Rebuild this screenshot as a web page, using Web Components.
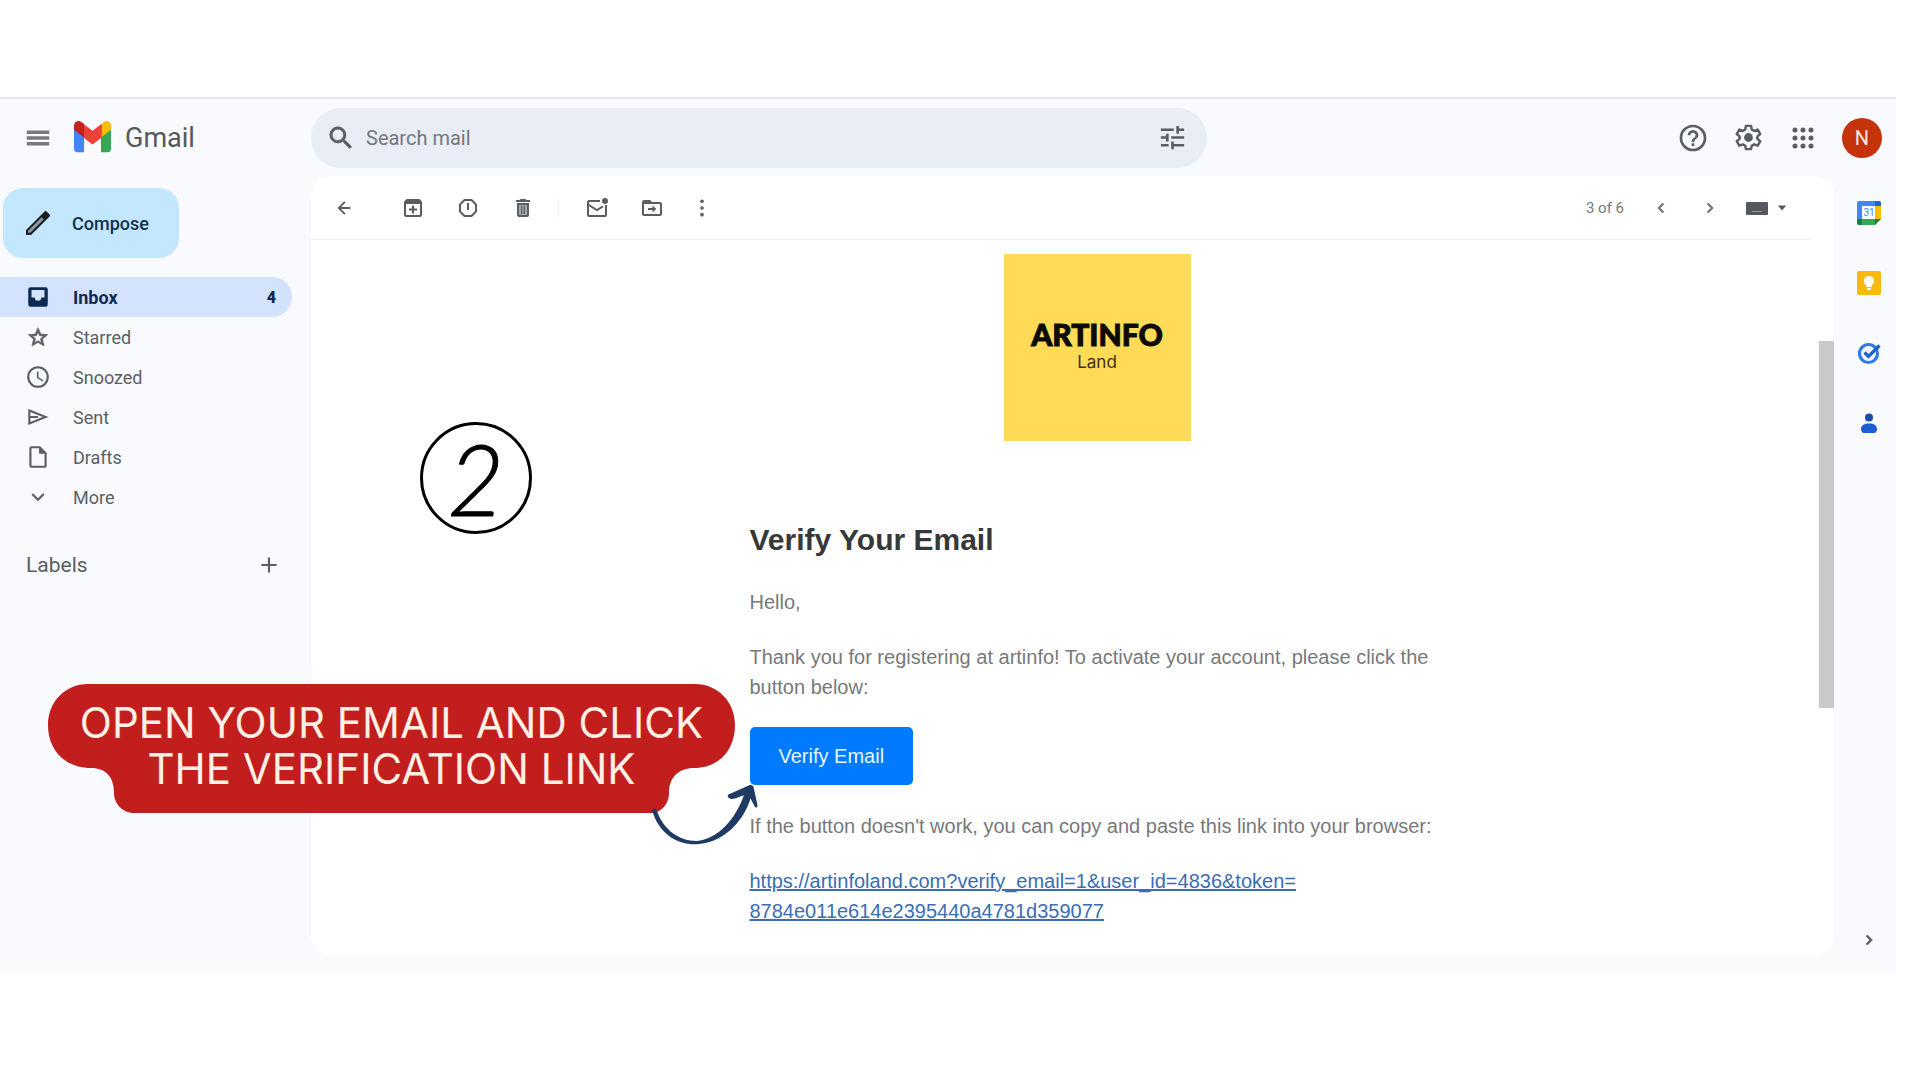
<!DOCTYPE html>
<html lang="en">
<head>
<meta charset="utf-8">
<title>Gmail - Verify Your Email</title>
<style>
    body {
        margin: 0;
        background: #fff;
        font-family: Roboto, "Liberation Sans", sans-serif;
        color: #5a5d61;
    }
</style>
</head>
<body>
<mail-app></mail-app>

<script>
const icons = {
    menu: `<path fill="#77797c" d="M3 18h18v-2.800H3zm0-4.600h18v-2.800H3zM3 6v2.800h18V6z"/>`,
    search: `<path stroke="currentColor" stroke-width=".5" d="M15.500 14h-.79l-.28-.27A6.470 6.470 0 0 0 16 9.500 6.500 6.500 0 1 0 9.500 16c1.610 0 3.090-.59 4.230-1.570l.27.28v.79l5 4.990L20.490 19zm-6 0C7.010 14 5 11.990 5 9.500S7.010 5 9.500 5 14 7.010 14 9.500 11.990 14 9.500 14z"/>`,
    tune: `<path d="M3 17v2h6v-2zM3 5v2h10V5zm10 16v-2h8v-2h-8v-2h-2v6zM7 9v2H3v2h4v2h2V9zm14 4v-2H11v2zm-6-4h2V7h4V5h-4V3h-2z"/>`,
    help: `<path d="M11 18h2v-2h-2zm1-16a10 10 0 1 0 0 20 10 10 0 0 0 0-20zm0 18c-4.410 0-8-3.590-8-8s3.590-8 8-8 8 3.590 8 8-3.590 8-8 8zm0-14a4 4 0 0 0-4 4h2c0-1.100.9-2 2-2s2 .9 2 2c0 2-3 1.750-3 5h2c0-2.250 3-2.500 3-5a4 4 0 0 0-4-4z"/>`,
    settings: `<path fill="none" stroke="currentColor" stroke-width="1.900" stroke-linejoin="round" d="M10 3h4l.5 2.800 1.900 1.100 2.700-1 2 3.400-2.200 1.800v2l2.200 1.800-2 3.400-2.700-1-1.900 1.100L14 21h-4l-.5-2.600-1.900-1.100-2.700 1-2-3.400 2.200-1.800v-2L2.900 9.300l2-3.400 2.700 1 1.900-1.100z"/><circle cx="12" cy="12" r="3.400"/>`,
    apps: `<g><circle cx="6" cy="6" r="1.900"/><circle cx="12" cy="6" r="1.900"/><circle cx="18" cy="6" r="1.900"/><circle cx="6" cy="12" r="1.900"/><circle cx="12" cy="12" r="1.900"/><circle cx="18" cy="12" r="1.900"/><circle cx="6" cy="18" r="1.900"/><circle cx="12" cy="18" r="1.900"/><circle cx="18" cy="18" r="1.900"/></g>`,
    pencil: `<path fill="#8c969e" d="M5 17.500 15 7l2.500 2.500L7 20H5z"/><path fill="#1c1f22" d="M17.660 3c-.25 0-.51.1-.7.29L3 17.250V21h3.750L20.710 7.040a1 1 0 0 0 0-1.410l-2.340-2.340A1 1 0 0 0 17.660 3zM14.700 7.700l1.600 1.600L6.200 19.300H4.700v-1.500z"/>`,
    inbox: `<path d="M19 3H5a2 2 0 0 0-2 2v14c0 1.100.9 2 2 2h14a2 2 0 0 0 2-2V5a2 2 0 0 0-2-2zm-1 9.500h-3a3 3 0 0 1-6 0H6V5.500h12z"/>`,
    star: `<path stroke="currentColor" stroke-width=".6" d="M21 9.800l-6.400-.5L12 3.500 9.400 9.300 3 9.800l4.900 4.200L6.400 20.300 12 17l5.600 3.300-1.500-6.300zM12 15.400l-3.200 1.900.9-3.700-2.800-2.500 3.700-.3L12 7.300l1.400 3.500 3.700.3-2.800 2.500.9 3.700z"/>`,
    clock: `<path d="M12 2a10 10 0 1 0 0 20 10 10 0 0 0 0-20zm0 18a8 8 0 1 1 0-16 8 8 0 0 1 0 16zm.5-13H11v6l5.250 3.150.75-1.230-4.500-2.670z"/>`,
    send: `<path fill="none" stroke="currentColor" stroke-width="2" d="M4 6 19 12 4 18zM4.500 12H12"/>`,
    draft: `<path d="M14 2H6a2 2 0 0 0-2 2v16c0 1.100.89 2 1.990 2H18a2 2 0 0 0 2-2V8zM6 20V4h7v5h5v11z"/>`,
    down: `<path d="M7.410 8.590 12 13.170l4.590-4.580L18 10l-6 6-6-6z"/>`,
    plus: `<path d="M19 13h-6v6h-2v-6H5v-2h6V5h2v6h6z"/>`,
    back: `<path d="M19 11H8.830l4.880-4.880L12.300 4.700 5 12l7.300 7.300 1.410-1.410L8.830 13H19z"/>`,
    archive: `<path d="M20.540 5.230l-1.390-1.680A1.450 1.450 0 0 0 18 3H6c-.47 0-.88.21-1.160.55L3.460 5.230A2 2 0 0 0 3 6.500V19c0 1.100.9 2 2 2h14a2 2 0 0 0 2-2V6.500c0-.48-.17-.93-.46-1.270zM5 19V8h14v11zM11 9.500v3H8V14.500h3v3h2v-3h3v-2h-3v-3z"/>`,
    spam: `<path fill="none" stroke="currentColor" stroke-width="2" d="M8.500 4h7l4.500 4.500v7L15.500 20h-7L4 15.500v-7z"/><path d="M11 7h2v7h-2z"/>`,
    trash: `<path fill="#a5a7a9" d="M7 8h10v11H7z"/><path d="M16 9v10H8V9zm-1.500-6h-5l-1 1H5v2h14V4h-3.500zM18 7H6v12c0 1.100.9 2 2 2h8a2 2 0 0 0 2-2z" fill-rule="evenodd"/><path d="M10 10v8h1.300v-8zm2.700 0v8H14v-8z"/>`,
    unread: `<path d="M22 9v10a2 2 0 0 1-2 2H4a2 2 0 0 1-2-2V6a2 2 0 0 1 2-2h11v2H4v2l8 5 5-3.200 1.800 1.100L12 15.200 4 10.200V19h16V9z"/><circle cx="20" cy="5" r="3"/>`,
    folder: `<path d="M20 6h-8l-2-2H4a2 2 0 0 0-2 2v12c0 1.100.9 2 2 2h16a2 2 0 0 0 2-2V8a2 2 0 0 0-2-2zm0 12H4V8h16zm-7.500-1.500 3.800-3.500-3.800-3.500V12H8v2h4.500z"/>`,
    more: `<circle cx="12" cy="4" r="2.200"/><circle cx="12" cy="12" r="2.200"/><circle cx="12" cy="20" r="2.200"/>`,
    prev: `<path d="M15.410 7.410 14 6l-6 6 6 6 1.410-1.410L10.830 12z" stroke="currentColor"/>`,
    next: `<path d="M10 6 8.590 7.410 13.170 12l-4.580 4.590L10 18l6-6z" stroke="currentColor"/>`,
    keyboard: `<path d="M2 6h20a1 1 0 0 1 1 1v11a1 1 0 0 1-1 1H2a1 1 0 0 1-1-1V7a1 1 0 0 1 1-1z"/><path fill="#999" d="M7 15h10v1H7z"/>`,
    caret: `<path d="M2 6h20L12 18z"/>`,
    gmail: `<path fill="#4285f4" d="M2 21.500h4.500V10L0 5v14.500c0 1.100.9 2 2 2z"/><path fill="#34a853" d="M17.500 21.500H22a2 2 0 0 0 2-2V5l-6.500 5z"/><path fill="#fbbc04" d="M17.500 4v8L24 7V4.500c0-3-3-4-5-2.400z"/><path fill="#ea4335" d="M6 12V3l6 4.700L18 3v9l-6 4.500z"/><path fill="#c5221f" d="M0 4.500V7l6.500 5V3.300L5 2.100C3 .5 0 1.500 0 4.500z"/>`,
    calendar: `<path fill="#4285f4" d="M2 0h16v5H5v13H0V2a2 2 0 0 1 2-2z"/><path fill="#1967d2" d="M18 0h4a2 2 0 0 1 2 2v3h-6z"/><path fill="#fbbc04" d="M18 5h6v13h-6z"/><path fill="#34a853" d="M5 18h13v6H5z"/><path fill="#188038" d="M0 18h5v6H2a2 2 0 0 1-2-2z"/><path fill="#188038" d="M18 18h6l-6 6z"/><path fill="#fff" d="M5 5h13v13H5z"/><text x="12" y="15" text-anchor="middle" font-size="10" fill="#4285f4">31</text>`,
    keep: `<rect width="24" height="24" rx="2" fill="#f9bb0b"/><path fill="#fff" d="M12 5a5 5 0 0 0-2.700 9.200V16h5.400v-1.800A5 5 0 0 0 12 5zm-2 12h4v2h-4z"/>`,
    tasks: `<circle cx="11.500" cy="12.500" r="9" fill="none" stroke="#2f7be5" stroke-width="3.200"/><path fill="none" stroke="#1c62cc" stroke-width="3.200" d="m7.500 11.500 4 4L22.500 4.500"/>`,
    person: `<circle cx="12" cy="6.500" r="4" fill="#174ea6"/><path fill="#1a5ed0" d="M4 18c0-3.500 3-5.500 8-5.500s8 2 8 5.500c0 2-1 4-3 4H7c-2 0-3-2-3-4z"/>`
};

class MailIcon extends HTMLElement {
    connectedCallback() {
        const size = this.getAttribute("size") || 24;
        this.attachShadow({mode: "open"}).innerHTML = `
        <style>
            :host { display: inline-flex; flex: none; }
            svg { display: block; fill: currentColor; font-family: Roboto, sans-serif; }
        </style>
        <svg width="${size}" height="${size}" viewBox="0 0 24 24" aria-hidden="true">${icons[this.getAttribute("name")]}</svg>`;
    }
}

class IconButton extends HTMLElement {
    connectedCallback() {
        this.attachShadow({mode: "open"}).innerHTML = `
        <style>
            :host { display: block; flex: none; width: 40px; }
            button {
                display: flex;
                align-items: center;
                justify-content: center;
                width: 100%;
                height: 40px;
                padding: 0;
                border: 0;
                background: none;
                color: inherit;
                cursor: pointer;
            }
        </style>
        <button type="button" aria-label="${this.getAttribute("label")}">
            <mail-icon name="${this.getAttribute("icon")}" size="${this.getAttribute("size") || 24}"></mail-icon>
        </button>`;
    }
}

class MailHeader extends HTMLElement {
    connectedCallback() {
        this.attachShadow({mode: "open"}).innerHTML = `
        <style>
            :host { display: block; }
            header {
                display: flex;
                align-items: center;
                height: 77px;
                border-top: 2px solid #e3e6e8;
            }
            .brand {
                display: flex;
                align-items: center;
                flex: none;
                box-sizing: border-box;
                width: 311px;
                padding-left: 18px;
            }
            .brand a {
                display: flex;
                align-items: center;
                gap: 14px;
                margin-left: 16px;
                color: #55585c;
                font-size: 27px;
                line-height: 36px;
                text-decoration: none;
            }
            form {
                display: flex;
                align-items: center;
                flex: 0 1 896px;
                box-sizing: border-box;
                height: 60px;
                padding: 0 15px;
                border-radius: 30px;
                background: #e9edf6;
            }
            label { display: flex; margin-right: 10px; }
            input {
                flex: 1;
                min-width: 0;
                padding: 0;
                border: 0;
                outline: 0;
                background: none;
                color: #55585c;
                font: 20px Roboto, sans-serif;
            }
            input::placeholder { color: #74777c; opacity: 1; }
            .actions {
                display: flex;
                align-items: center;
                gap: 15px;
                margin-left: auto;
                padding-right: 14px;
            }
            .avatar {
                width: 40px;
                height: 40px;
                margin-left: 4px;
                padding: 0;
                border: 0;
                border-radius: 50%;
                background: #c5330b;
                color: #fbe9e4;
                font: 20px Roboto, sans-serif;
            }
        </style>
        <header>
            <div class="brand">
                <icon-button icon="menu" size="30" label="Main menu"></icon-button>
                <a href="#inbox"><mail-icon name="gmail" size="37"></mail-icon>Gmail</a>
            </div>
            <form role="search">
                <label for="q" aria-label="Search mail"><mail-icon name="search" size="30"></mail-icon></label>
                <input id="q" type="text" placeholder="Search mail">
                <icon-button icon="tune" size="31" label="Search options"></icon-button>
            </form>
            <div class="actions">
                <icon-button icon="help" size="32" label="Support"></icon-button>
                <icon-button icon="settings" size="31" label="Settings"></icon-button>
                <icon-button icon="apps" size="32" label="Apps"></icon-button>
                <button class="avatar" type="button" aria-label="Account">N</button>
            </div>
        </header>`;
    }
}

class NavItem extends HTMLElement {
    connectedCallback() {
        this.attachShadow({mode: "open"}).innerHTML = `
        <style>
            :host { display: block; }
            a {
                display: flex;
                align-items: center;
                gap: 22px;
                height: 40px;
                padding: 0 16px 0 25px;
                border-radius: 0 20px 20px 0;
                color: #5c5f63;
                font-size: 18px;
                text-decoration: none;
            }
            span { flex: 1; }
            :host([active]) a { background: #d3e3fd; color: #0d2a52; font-weight: 700; }
            b { font-size: 16px; }
        </style>
        <a href="#">
            <mail-icon name="${this.getAttribute("icon")}" size="26"></mail-icon>
            <span><slot></slot></span>
            <b>${this.getAttribute("count") || ""}</b>
        </a>`;
    }
}

class MailSidebar extends HTMLElement {
    connectedCallback() {
        this.attachShadow({mode: "open"}).innerHTML = `
        <style>
            :host { display: block; flex: none; width: 311px; }
            .compose {
                display: flex;
                align-items: center;
                gap: 18px;
                height: 70px;
                margin: 12px 0 19px 3px;
                padding: 0 30px 0 19px;
                border: 0;
                border-radius: 20px;
                background: #c2e7ff;
                color: #12314a;
                font: 500 18px Roboto, sans-serif;
            }
            nav { margin-right: 19px; }
            .labels {
                display: flex;
                align-items: center;
                justify-content: space-between;
                height: 40px;
                margin: 28px 22px 0 26px;
            }
            h2 { margin: 0; font-size: 21px; font-weight: 400; }
        </style>
        <button class="compose" type="button"><mail-icon name="pencil" size="32"></mail-icon>Compose</button>
        <nav>
            <nav-item icon="inbox" count="4" active>Inbox</nav-item>
            <nav-item icon="star">Starred</nav-item>
            <nav-item icon="clock">Snoozed</nav-item>
            <nav-item icon="send">Sent</nav-item>
            <nav-item icon="draft">Drafts</nav-item>
            <nav-item icon="down">More</nav-item>
        </nav>
        <div class="labels">
            <h2>Labels</h2>
            <icon-button icon="plus" size="26" label="Create new label"></icon-button>
        </div>`;
    }
}

class MailToolbar extends HTMLElement {
    connectedCallback() {
        this.attachShadow({mode: "open"}).innerHTML = `
        <style>
            :host {
                display: flex;
                align-items: center;
                gap: 15px;
                height: 63px;
                margin-right: 23px;
                padding: 0 24px 0 13px;
                border-bottom: 1px solid #eceeef;
            }
            .first { margin-right: 14px; }
            .narrow { width: 30px; }
            hr { width: 1px; height: 20px; margin: 0 3px 0 0; border: 0; background: #eceeef; }
            .pager { display: flex; align-items: center; gap: 9px; margin-left: auto; font-size: 15px; color: #77797c; }
            .pager span { margin-right: 8px; }
            .input-tool {
                display: flex;
                align-items: center;
                gap: 8px;
                padding: 0;
                border: 0;
                background: none;
                color: #55585c;
            }
        </style>
        <icon-button class="first" icon="back" size="22" label="Back to Inbox"></icon-button>
        <icon-button icon="archive" label="Archive"></icon-button>
        <icon-button icon="spam" label="Report spam"></icon-button>
        <icon-button icon="trash" label="Delete"></icon-button>
        <hr>
        <icon-button icon="unread" label="Mark as unread"></icon-button>
        <icon-button icon="folder" label="Move to"></icon-button>
        <icon-button class="narrow" icon="more" size="20" label="More"></icon-button>
        <div class="pager">
            <span>3 of 6</span>
            <icon-button icon="prev" size="20" label="Newer"></icon-button>
            <icon-button icon="next" size="20" label="Older"></icon-button>
        </div>
        <button class="input-tool" type="button" aria-label="Select input tool">
            <mail-icon name="keyboard"></mail-icon><mail-icon name="caret" size="10"></mail-icon>
        </button>`;
    }
}

class EmailMessage extends HTMLElement {
    connectedCallback() {
        this.attachShadow({mode: "open"}).innerHTML = `
        <style>
            :host { display: block; flex: 1; padding: 14px 0 0 64px; }
            article {
                max-width: 695px;
                margin: 0 auto;
                color: #77797b;
                font: 20px/30px "Liberation Sans", Arial, sans-serif;
            }
            .logo {
                display: flex;
                flex-direction: column;
                align-items: center;
                justify-content: center;
                width: 187px;
                height: 187px;
                margin: 0 auto;
                background: #ffdb58;
                color: #0d0b05;
            }
            .logo strong { font: 900 30px/28px Lato, sans-serif; -webkit-text-stroke: 1px #0d0b05; }
            .logo span { font: 17px/28px Inter, sans-serif; color: #3a3115; }
            h1 { margin: 81px 0 29px; color: #36383a; font-size: 30px; line-height: 36px; }
            p { margin: 0 0 25px; }
            .button-row { margin-bottom: 26px; }
            .verify {
                display: inline-block;
                padding: 14px 29px;
                border-radius: 5px;
                background: #007bff;
                color: #e6f6ff;
                text-decoration: none;
            }
            .link { color: #3a6db5; }
        </style>
        <article>
            <div class="logo"><strong>ARTINFO</strong><span>Land</span></div>
            <h1>Verify Your Email</h1>
            <p>Hello,</p>
            <p>Thank you for registering at artinfo! To activate your account, please click the button below:</p>
            <p class="button-row"><a class="verify" href="#verify">Verify Email</a></p>
            <p>If the button doesn't work, you can copy and paste this link into your browser:</p>
            <p><a class="link" href="#verify">https://artinfoland.com?verify_email=1&amp;user_id=4836&amp;token=<wbr>8784e011e614e2395440a4781d359077</a></p>
        </article>`;
    }
}

class SidePanel extends HTMLElement {
    connectedCallback() {
        this.attachShadow({mode: "open"}).innerHTML = `
        <style>
            :host {
                display: flex;
                flex-direction: column;
                flex: none;
                align-items: center;
                gap: 30px;
                box-sizing: border-box;
                width: 62px;
                padding: 17px 0 12px 8px;
            }
            .toggle { margin-top: auto; }
        </style>
        <icon-button icon="calendar" label="Calendar"></icon-button>
        <icon-button icon="keep" label="Keep"></icon-button>
        <icon-button icon="tasks" label="Tasks"></icon-button>
        <icon-button icon="person" label="Contacts"></icon-button>
        <icon-button class="toggle" icon="next" size="20" label="Hide side panel"></icon-button>`;
    }
}

class StepBadge extends HTMLElement {
    connectedCallback() {
        this.attachShadow({mode: "open"}).innerHTML = `
        <style>
            :host {
                display: flex;
                align-items: center;
                justify-content: center;
                box-sizing: border-box;
                width: 112px;
                height: 112px;
                border: 3px solid #000;
                border-radius: 50%;
                color: #000;
                font: italic 300 98px/98px Lato, sans-serif;
                -webkit-text-stroke: 1px #000;
            }
        </style>
        <slot></slot>`;
    }
}

class CalloutNote extends HTMLElement {
    connectedCallback() {
        this.attachShadow({mode: "open"}).innerHTML = `
        <style>
            :host { display: block; width: 687px; height: 130px; }
            svg { position: absolute; left: 0; top: 0; overflow: visible; }
            p {
                position: relative;
                margin: 0;
                padding-top: 17px;
                color: #fff0e4;
                font: 42px/46px Inter, sans-serif;
                text-align: center;
            }
        </style>
        <svg width="687" height="130" viewBox="0 0 687 130" aria-hidden="true">
            <path fill="#c31e1e" d="M40 1H647C670 1 687 19 687 42C687 66 672 85 646 85C631 85 621 94 621 110C621 121 613 130 603 130H86C75 130 66 121 66 110C66 94 58 85 43 85C16 85 0 66 0 42C0 19 17 1 40 1Z"/>
            <path fill="#1f3a63" transform="translate(592 37) scale(.333)" d="M36 270C34 266 48 264 50 270C70 332 120 363 170 363C232 360 288 296 312 226C300 229 286 238 273 237C264 235 260 226 267 223L328 196C335 193 340 196 341 202L353 256C353 264 347 265 344 259L332 236C308 312 245 370 170 373C115 375 58 345 36 270Z"/>
        </svg>
        <p><slot></slot></p>`;
    }
}

class MailApp extends HTMLElement {
    connectedCallback() {
        this.attachShadow({mode: "open"}).innerHTML = `
        <style>
            :host {
                display: flex;
                position: relative;
                box-sizing: border-box;
                min-height: 100vh;
                padding: 97px 24px 108px 0;
            }
            .app { display: flex; flex: 1; flex-direction: column; background: #f8fafd; }
            .columns { display: flex; flex: 1; }
            main {
                display: flex;
                flex: 1;
                flex-direction: column;
                min-width: 0;
                margin-bottom: 16px;
                border-radius: 20px;
                background: #fff;
            }
            .view { display: flex; flex: 1; }
            .track { flex: none; width: 15px; padding-top: 101px; }
            .thumb { height: 367px; background: #c9c9c9; }
            step-badge { position: absolute; left: 420px; top: 422px; }
            callout-note { position: absolute; left: 48px; top: 683px; }
        </style>
        <div class="app">
            <mail-header></mail-header>
            <div class="columns">
                <mail-sidebar></mail-sidebar>
                <main>
                    <mail-toolbar></mail-toolbar>
                    <div class="view">
                        <email-message></email-message>
                        <div class="track"><div class="thumb"></div></div>
                    </div>
                </main>
                <side-panel></side-panel>
            </div>
        </div>
        <step-badge>2</step-badge>
        <callout-note>OPEN YOUR EMAIL AND CLICK<br>THE VERIFICATION LINK</callout-note>`;
    }
}

customElements.define("mail-icon", MailIcon);
customElements.define("icon-button", IconButton);
customElements.define("mail-header", MailHeader);
customElements.define("nav-item", NavItem);
customElements.define("mail-sidebar", MailSidebar);
customElements.define("mail-toolbar", MailToolbar);
customElements.define("email-message", EmailMessage);
customElements.define("side-panel", SidePanel);
customElements.define("step-badge", StepBadge);
customElements.define("callout-note", CalloutNote);
customElements.define("mail-app", MailApp);
</script>
</body>
</html>
